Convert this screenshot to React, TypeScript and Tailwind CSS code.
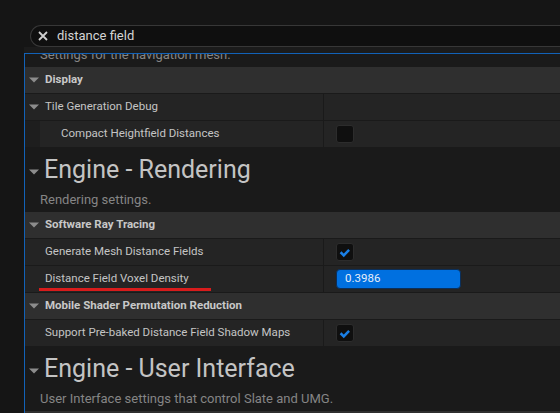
import React from "react";

const Arrow = ({ className = "" }: { className?: string }) => (
  <svg width="10" height="6" viewBox="0 0 10 6" className={className}>
    <polygon points="0,0.5 10,0.5 5,5.5" fill="#8c8c8c" />
  </svg>
);

const CheckBox = ({ checked }: { checked: boolean }) => (
  <div className="w-[18px] h-[18px] rounded-[3px] border border-[#2c2c2c] bg-[#0f0f0f] flex items-center justify-center">
    {checked && (
      <svg width="18" height="18" viewBox="0 0 18 18">
        <path d="M4 9.3 L7.6 12.8 L13.6 6.6" stroke="#1a7fe6" strokeWidth="2.8" fill="none" />
      </svg>
    )}
  </div>
);

const Category = ({ label }: { label: string }) => (
  <div className="h-[27px] border-b border-[#1a1a1a] bg-[#2f2f2f] flex items-center pl-[4px]">
    <Arrow />
    <span className="ml-[6px] text-[11.5px] font-bold text-[#c8c8c8]">{label}</span>
  </div>
);

const PropRow = ({
  label,
  value,
  children,
}: {
  label: React.ReactNode;
  value?: React.ReactNode;
  children?: React.ReactNode;
}) => (
  <div className="relative h-[27px] border-b border-[#1a1a1a] bg-[#242424] flex">
    <div className="w-[299px] shrink-0 flex items-center border-r border-[#1a1a1a]">{label}</div>
    <div className="flex-1 flex items-center pl-[12px]">{value}</div>
    {children}
  </div>
);

const Header = ({ title, desc }: { title: string; desc: string }) => (
  <div className="h-[64px] bg-[#1a1a1a] pt-[8px]">
    <div className="flex items-center pl-[4px] h-[28px]">
      <Arrow className="mt-[3px]" />
      <span className="ml-[5px] text-[25px] leading-[28px] text-[#c4c4c4]">{title}</span>
    </div>
    <div className="mt-[8px] pl-[15px] text-[13px] leading-[16px] text-[#858585]">{desc}</div>
  </div>
);

export default function App() {
  return (
    <div className="w-[560px] h-[413px] bg-[#151515] overflow-hidden font-['Roboto',sans-serif]">
      <div className="pt-[25px] pl-[30px]">
        <div className="h-[22px] rounded-l-[11px] border border-r-0 border-[#373737] bg-[#0f0f0f] flex items-center pl-[7px]">
          <svg width="10" height="10" viewBox="0 0 10 10">
            <path d="M1 1 L9 9 M9 1 L1 9" stroke="#cfcfcf" strokeWidth="1.8" />
          </svg>
          <span className="ml-[9px] text-[13px] text-[#d4d4d4]">distance field</span>
        </div>
      </div>
      <div className="ml-[24px] h-[6px] bg-[#1b1b1b]" />
      <div className="ml-[24px] h-[360px] border-l border-t border-[#1262b8] bg-[#1a1a1a] overflow-hidden">
        <div className="mt-[-7px] pb-[4px] pl-[15px] text-[13px] leading-[16px] text-[#858585]">
          Settings for the navigation mesh.
        </div>
        <Category label="Display" />
        <PropRow
          label={
            <div className="flex items-center pl-[4px]">
              <Arrow />
              <span className="ml-[6px] text-[11.5px] text-[#c4c4c4]">Tile Generation Debug</span>
            </div>
          }
        />
        <div className="h-[27px] border-b border-[#1a1a1a] flex">
          <div className="w-[15px] shrink-0 bg-[#1e1e1e]" />
          <div className="flex-1 flex bg-[#242424]">
            <div className="w-[284px] shrink-0 flex items-center border-r border-[#1a1a1a] pl-[21px] text-[11.5px] text-[#c4c4c4]">
              Compact Heightfield Distances
            </div>
            <div className="flex-1 flex items-center pl-[12px]">
              <CheckBox checked={false} />
            </div>
          </div>
        </div>
        <Header title="Engine - Rendering" desc="Rendering settings." />
        <Category label="Software Ray Tracing" />
        <PropRow
          label={<span className="pl-[20px] text-[11.5px] text-[#c4c4c4]">Generate Mesh Distance Fields</span>}
          value={<CheckBox checked />}
        />
        <PropRow
          label={<span className="pl-[20px] text-[11.5px] text-[#c4c4c4]">Distance Field Voxel Density</span>}
          value={
            <div className="w-[125px] h-[20px] rounded-[4px] border border-[#0b2f5a] bg-[#0070e0] flex items-center pl-[8px] text-[11.5px] text-[#e6eefa]">
              0.3986
            </div>
          }
        >
          <div className="absolute left-[14px] top-[22px] w-[172px] h-[3px] bg-[#d81c1c]" />
        </PropRow>
        <Category label="Mobile Shader Permutation Reduction" />
        <PropRow
          label={
            <span className="pl-[20px] text-[11.5px] text-[#c4c4c4]">Support Pre-baked Distance Field Shadow Maps</span>
          }
          value={<CheckBox checked />}
        />
        <Header title="Engine - User Interface" desc="User Interface settings that control Slate and UMG." />
        <div className="h-[27px] bg-[#2f2f2f]" />
      </div>
    </div>
  );
}
